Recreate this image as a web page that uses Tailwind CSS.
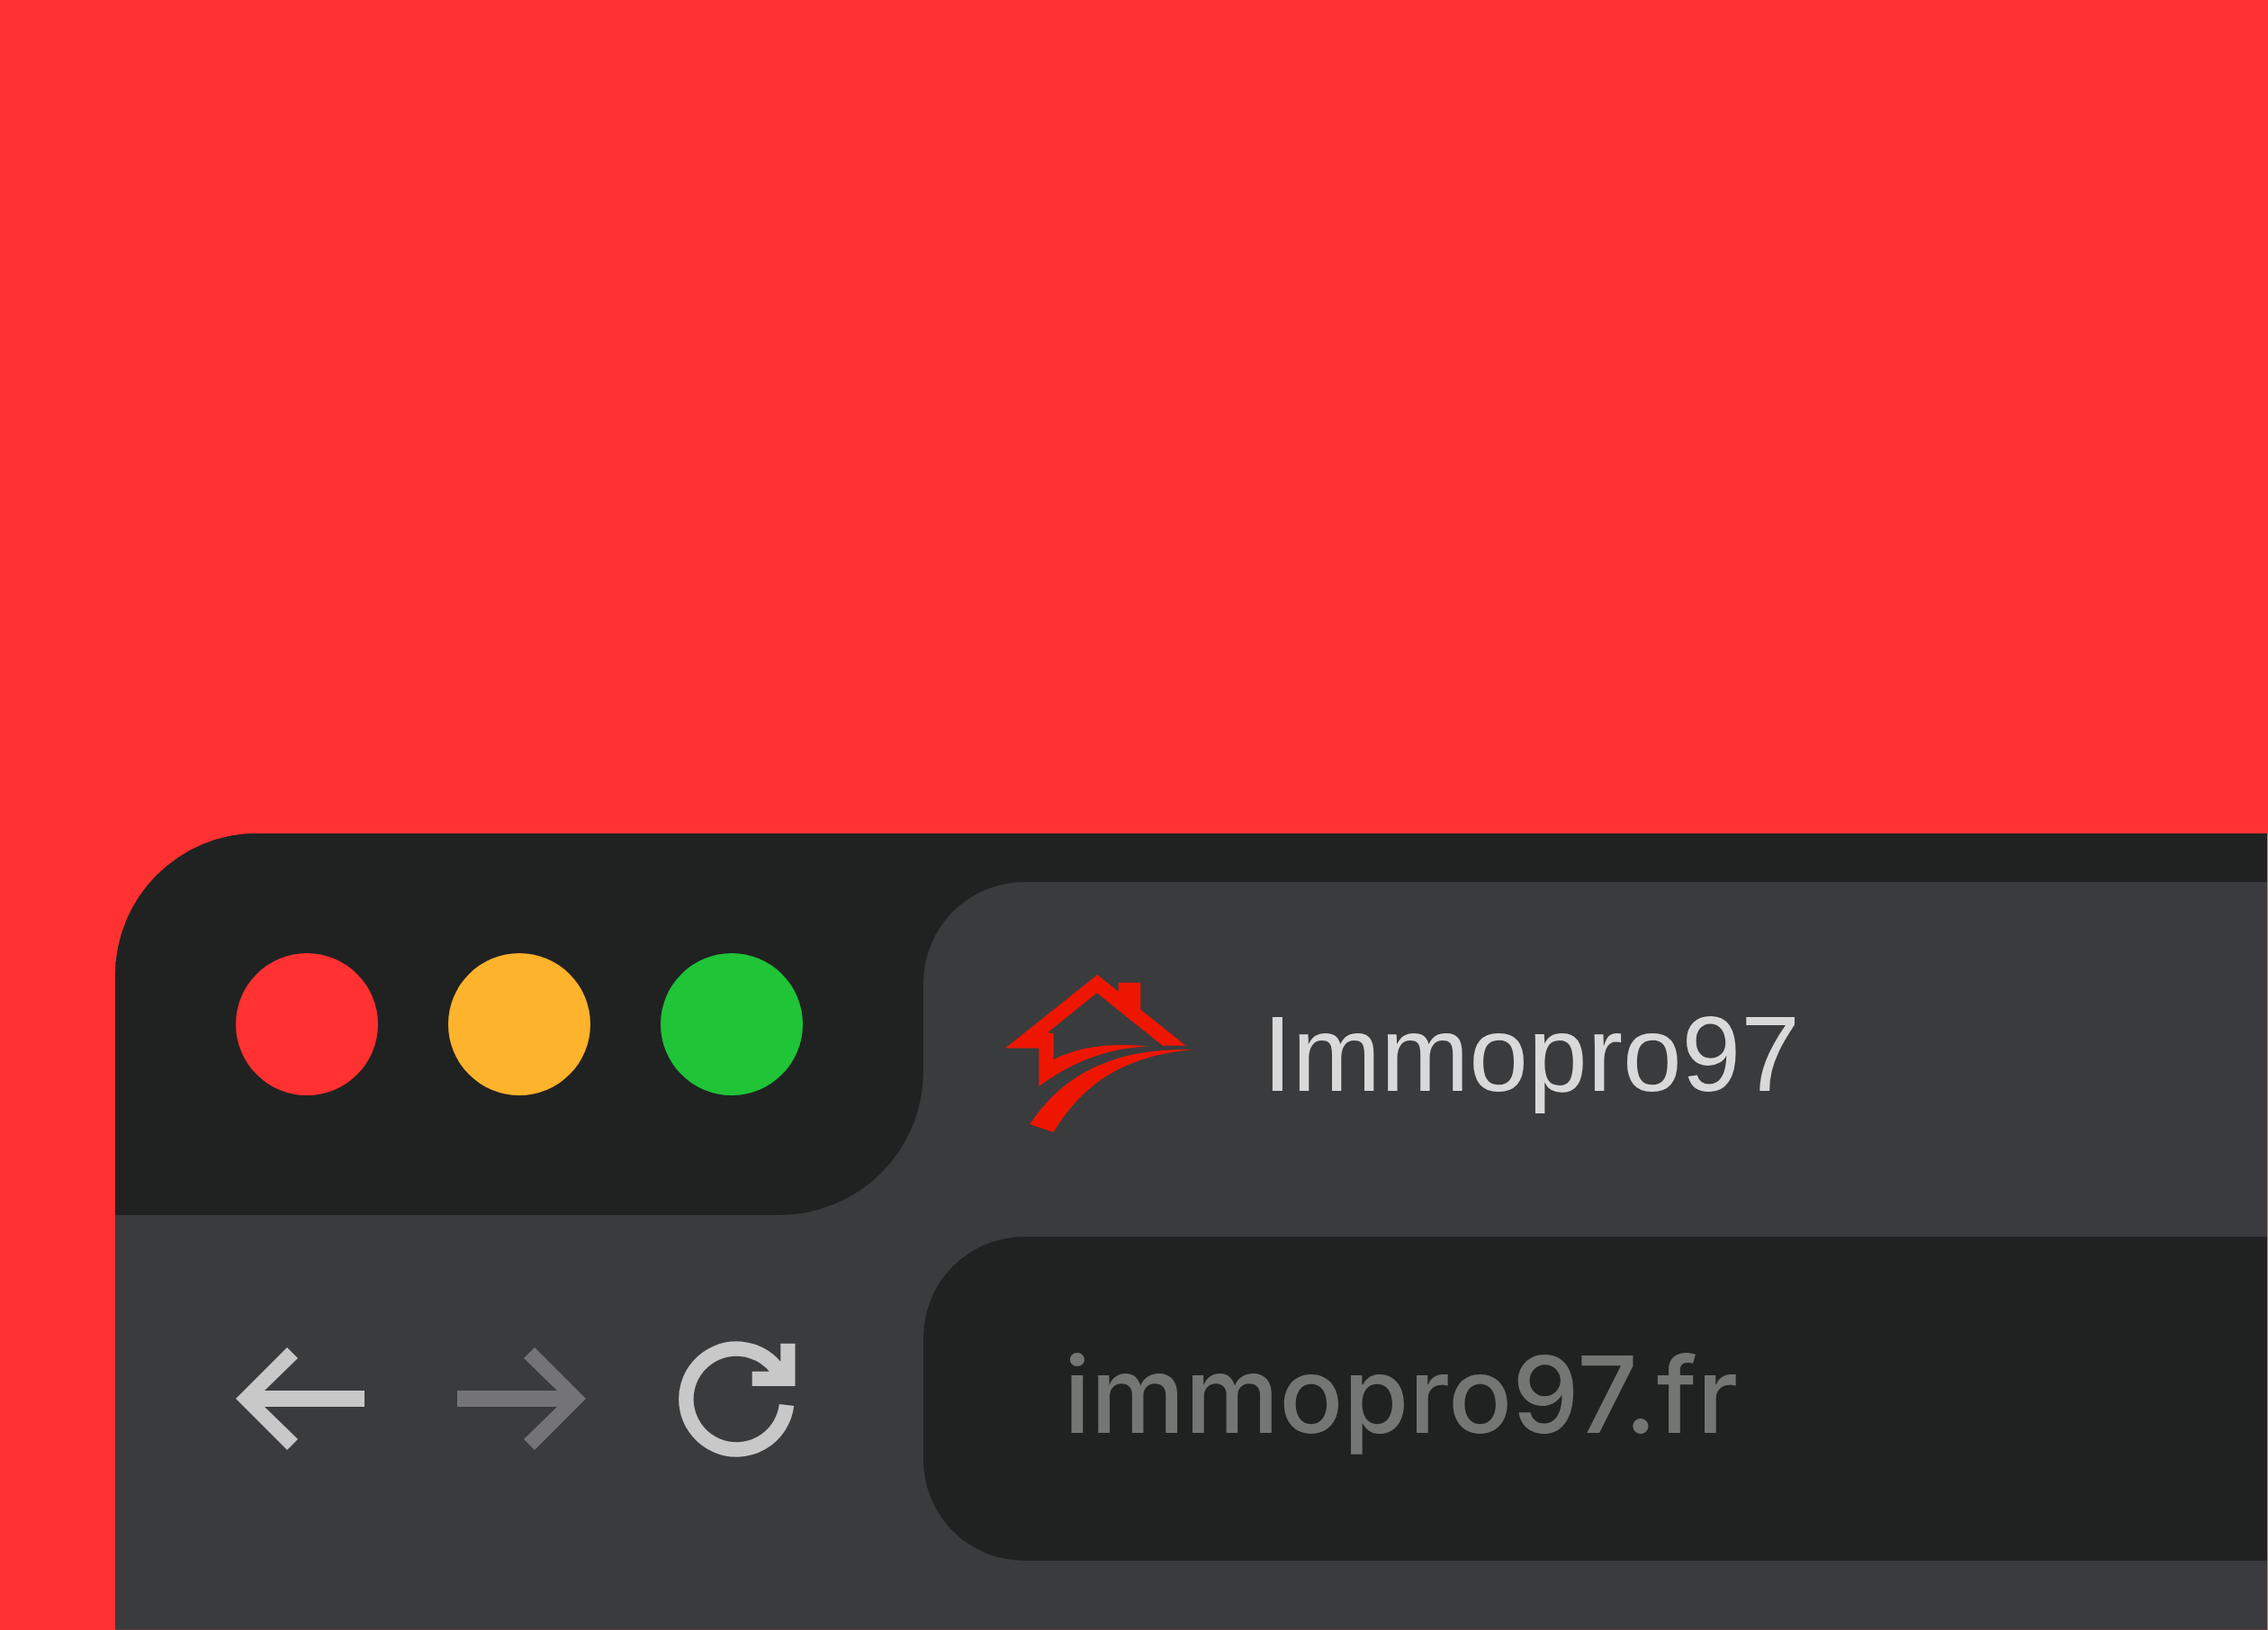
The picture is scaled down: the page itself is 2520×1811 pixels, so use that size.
<!DOCTYPE html>
<html lang="fr">
<head>
<meta charset="utf-8">
<title>Immopro97</title>
<script src="https://cdn.jsdelivr.net/npm/@tailwindcss/browser@4"></script>
</head>
<body class="bg-[#ff3131] min-h-screen flex flex-col overflow-hidden font-['Liberation_Sans',sans-serif]">
<main class="mt-[926px] ml-32 grow flex flex-col rounded-tl-[158px] border-r border-b border-r-[#d9767a] border-b-[#5a3a3e] bg-[#3a3b3d] overflow-hidden">
  <header class="flex bg-[linear-gradient(#202221_80px,#3a3b3d_80px)]">
    <div class="w-[898px] shrink-0 h-[424px] flex items-center gap-[78px] pl-[134px] bg-[#202221] rounded-br-[160px]">
      <button aria-label="Fermer" class="size-[158px] rounded-full bg-[#ff3131]"></button>
      <button aria-label="Réduire" class="size-[158px] rounded-full bg-[#fdb32b]"></button>
      <button aria-label="Agrandir" class="size-[158px] rounded-full bg-[#1fc437]"></button>
    </div>
    <div class="grow bg-[#202221] pt-[54px] flex">
      <div class="grow flex items-center bg-[#3a3b3d] rounded-tl-[112px] pt-3 pl-[91px] gap-[76px]">
        <svg class="w-[210px] h-[176px] shrink-0" viewBox="27 23 210 176" fill="#ef1601" aria-hidden="true">
          <path d="M27 104.500 129.300 23 152.700 41.700V31.700H177.300V61.700L227.500 101.700H201.700L128.700 43.300 74 87.300 80.700 88.300V117.300C112 101 150 99 187 102.500 145 104 105 117 64.300 147V104.500Z"/>
          <path d="M54 189.300C93 131 150 104 237 106 165 112 115 140 80.700 198Z"/>
        </svg>
        <h1 class="text-[118px] leading-[136px] text-[#d9d9d9]">Immopro97</h1>
      </div>
    </div>
  </header>
  <nav class="flex pt-6" aria-label="Navigation">
    <div class="w-[898px] shrink-0 h-[360px] flex items-center pl-[134px]">
      <button aria-label="Précédent" class="text-[#c8c8c8]"><svg class="w-[143px] h-[114px]" viewBox="0 0 143 114" fill="currentColor"><path d="M0 57 57 0 69 12 32 48H143V66H32L69 102 57 114Z"/></svg></button>
      <button aria-label="Suivant" class="ml-[103px] text-[#747476]"><svg class="w-[143px] h-[114px]" viewBox="0 0 143 114" fill="currentColor"><path d="M143 57 86 0 74 12 111 48H0V66H111L74 102 86 114Z"/></svg></button>
      <button aria-label="Actualiser" class="ml-[103px] text-[#c8c8c8]"><svg class="w-[130px] h-[130px]" viewBox="0 0 130 130"><path d="M120 72A56 56 0 1 1 112 36" fill="none" stroke="currentColor" stroke-width="16.500"/><path d="M113.300 3.700H129.500V51H81.700V34.700H101L113.300 23.300Z" fill="currentColor"/></svg></button>
    </div>
    <input aria-label="Adresse" value="immopro97.fr" class="grow min-w-0 h-[360px] rounded-l-[112px] bg-[#202221] text-[#747674] pl-[156px] pb-[10px] font-['Inter',sans-serif] font-medium text-[118px] outline-none">
  </nav>
</main>
</body>
</html>
